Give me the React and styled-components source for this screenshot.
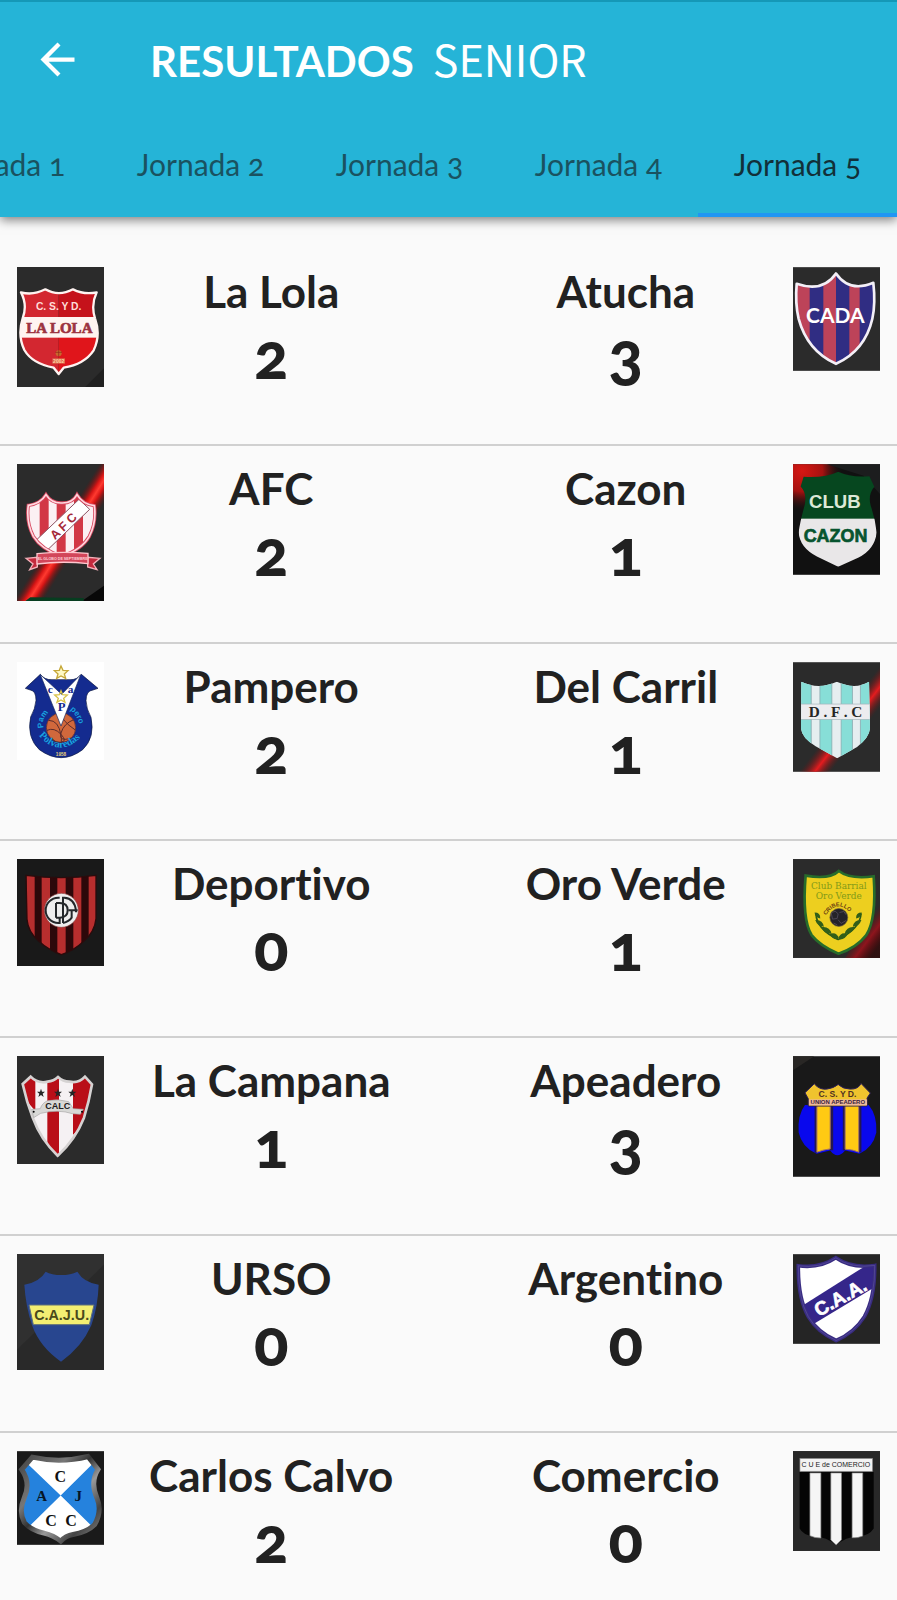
import React from "react";
import styled, { createGlobalStyle } from "styled-components";

const GlobalStyle = createGlobalStyle`
  * { box-sizing: border-box; }
  body {
    margin: 0;
    background: #fafafa;
    color: #212121;
    font-family: Lato, "Open Sans", sans-serif;
    font-variant-ligatures: none;
  }
`;

const Screen = styled.div`
  display: flex;
  flex-direction: column;
  height: 100vh;
`;

const AppBar = styled.header`
  position: relative;
  z-index: 1;
  flex: none;
  background: #25b4d7;
  border-top: 2px solid #1598b7;
  box-shadow: 0 3px 10px rgba(0, 0, 0, 0.5);
`;

const Toolbar = styled.div`
  display: flex;
  align-items: center;
  height: 114px;
  padding-left: 32px;
  gap: 67px;
`;

const BackButton = styled.button`
  display: flex;
  padding: 0;
  border: 0;
  background: none;
  color: #fff;
  cursor: pointer;
`;

const Title = styled.h1`
  display: flex;
  align-items: baseline;
  gap: 19px;
  margin: 0;
  color: #fff;
  font-size: 42px;
  line-height: 56px;
  font-weight: 700;
`;

const Category = styled.span`
  font-family: "Noto Sans CJK SC", "Noto Sans", sans-serif;
  font-size: 43px;
  font-weight: 400;
`;

const Tabs = styled.div`
  display: flex;
  justify-content: flex-end;
  overflow: hidden;
`;

const Tab = styled.button`
  flex: 0 0 199px;
  height: 101px;
  padding: 0 0 2px;
  border: 0;
  border-bottom: 4px solid ${(p) => (p.$active ? "#2196f3" : "transparent")};
  background: none;
  color: ${(p) => (p.$active ? "#123039" : "#1a5260")};
  font-family: inherit;
  font-size: 30px;
  font-variant-numeric: oldstyle-nums;
  white-space: nowrap;
  cursor: pointer;
`;

const MatchList = styled.ul`
  flex: 1;
  min-height: 0;
  margin: 0;
  padding: 32px 0 0;
  list-style: none;
  overflow-y: auto;
  scrollbar-width: none;
`;

const MatchRow = styled.li`
  display: flex;
  align-items: flex-start;
  height: 22vw;
  padding: 18px 17px 0;
  border-bottom: 2px solid #d0d0d0;
`;

const Side = styled.div`
  flex: 1;
  text-align: center;
  padding: ${(p) => (p.$away ? "0 0 0 10px" : "0 10px 0 0")};
`;

const TeamName = styled.h2`
  margin: 0;
  font-size: 44px;
  line-height: 48px;
  font-weight: 700;
  white-space: nowrap;
`;

const Score = styled.p`
  margin: 0;
  font-size: 64px;
  line-height: 80px;
  font-weight: 900;
  font-variant-numeric: oldstyle-nums;
`;

const CrestSvg = styled.svg`
  flex: none;
  display: block;
  width: 87px;
`;

const sans = "Liberation Sans, sans-serif";
const serif = "Liberation Serif, serif";

function Crest({ box, label, bg = "#2b2b2b", children }) {
  const [x, y, w, h] = box;
  return (
    <CrestSvg viewBox={box.join(" ")} height={Math.round(h / 3)} role="img" aria-label={label}>
      <rect x={x} y={y} width={w} height={h} fill={bg} />
      {children}
    </CrestSvg>
  );
}

const T = ({ x, y, size, fill, family = sans, weight = 700, anchor = "middle", ...rest }) => (
  <text x={x} y={y} fontSize={size} fill={fill} fontFamily={family} fontWeight={weight} textAnchor={anchor} {...rest} />
);

const lolaShape =
  "M62 112Q98 122 135 103Q175 126 218 103Q252 120 289 112Q271 150 284 190Q302 240 280 286Q252 328 190 338L175 357L160 338Q96 326 72 285Q51 240 67 190Q82 150 62 112Z";
const LaLola = () => (
  <Crest box={[50, 36, 261, 360]} label="La Lola">
    <path d="M311 340L255 396H311Z" fill="#202020" />
    <clipPath id="lola"><path d={lolaShape} /></clipPath>
    <g clipPath="url(#lola)">
      <rect x="50" y="90" width="125" height="280" fill="#d32730" />
      <rect x="175" y="90" width="130" height="280" fill="#c5121b" />
      <rect x="175" y="248" width="130" height="120" fill="#e0151b" />
      <rect x="50" y="186" width="261" height="62" fill="#fff4f1" />
    </g>
    <path d={lolaShape} fill="none" stroke="#fff3f1" strokeWidth="7" strokeLinejoin="round" />
    <T x={175} y={165} size={31} fill="#ffdcd8" weight={700}>C. S. Y D.</T>
    <T x={177} y={233} size={45} fill="#9c3340" family={serif} stroke="#9c3340" strokeWidth="2">LA LOLA</T>
    <circle cx="175" cy="295" r="9" fill="#c8682d" />
    <path d="M165 292h20M175 286v18" stroke="#8f2418" strokeWidth="2" />
    <rect x="156" y="310" width="38" height="16" fill="#dc6a4d" />
    <T x={175} y={324} size={15} fill="#ffd5a5">2002</T>
  </Crest>
);

const atuchaShape =
  "M1041 101Q1119 128 1159 70Q1199 128 1271 98Q1278 160 1268 206Q1246 302 1159 341Q1073 302 1047 206Q1036 160 1041 101Z";
const Atucha = () => (
  <Crest box={[1030, 51, 261, 311]} label="Atucha">
    <clipPath id="atucha"><path d={atuchaShape} /></clipPath>
    <g clipPath="url(#atucha)">
      <rect x="1030" y="60" width="261" height="290" fill="#302d83" />
      <rect x="1030" y="60" width="50" height="290" fill="#bd4359" />
      <rect x="1121" y="60" width="38" height="290" fill="#bd4359" />
      <rect x="1199" y="60" width="31" height="290" fill="#bd4359" />
    </g>
    <path d={atuchaShape} fill="none" stroke="#f3eff7" strokeWidth="8" strokeLinejoin="round" />
    <T x={1157} y={220} size={63} fill="#fff" family="Lato, sans-serif">CADA</T>
  </Crest>
);

const afcShape =
  "M84 154Q120 150 137 122Q153 148 184 147Q216 148 230 122Q247 151 282 155Q289 205 267 247Q245 286 184 307Q123 286 99 247Q77 205 84 154Z";
const Afc = () => (
  <Crest box={[50, 30, 261, 411]} label="AFC">
    <defs>
      <linearGradient id="beamA" gradientUnits="userSpaceOnUse" x1="164" y1="242" x2="228" y2="282">
        <stop offset="0" stopColor="#650d0d" stopOpacity="0" />
        <stop offset="0.35" stopColor="#d51515" />
        <stop offset="0.5" stopColor="#ff3a30" />
        <stop offset="0.65" stopColor="#d51515" />
        <stop offset="1" stopColor="#650d0d" stopOpacity="0" />
      </linearGradient>
      <clipPath id="afc"><path d={afcShape} /></clipPath>
    </defs>
    <path d="M50 30H311V441H50Z" fill="url(#beamA)" />
    <path d="M311 395L245 441H311Z" fill="#080808" />
    <path d="M90 430L250 432V441H75Z" fill="#073d20" />
    <g clipPath="url(#afc)">
      <rect x="70" y="110" width="225" height="205" fill="#fbf0f3" />
      <path d="M118 110h27v200h-27zM169 110h27v200h-27zM221 110h27v200h-27z" fill="#d23745" />
      <path d="M104 262L236 136L268 166L134 295Z" fill="#fff" stroke="#8c5261" strokeWidth="3" />
    </g>
    <path d={afcShape} fill="none" stroke="#d7475f" strokeWidth="10" />
    <path d={afcShape} fill="none" stroke="#ffd8df" strokeWidth="5" />
    <T x={189} y={229} size={37} fill="#a52838" transform="rotate(-44 189 216)">A F C</T>
    <path d="M77 313L111 310V339L88 347L98 330ZM299 313L262 310V339L290 347L279 330Z" fill="#c42a3d" stroke="#f3b1ba" strokeWidth="4" />
    <path d="M110 299Q185 292 263 298V329Q185 320 110 330Z" fill="#d2465a" stroke="#ffc6ce" strokeWidth="4" />
    <T x={187} y={317} size={11} fill="#ffd0d6">EL GLOBO DE SEPTIEMBRE</T>
  </Crest>
);

const Cazon = () => (
  <Crest box={[48, 30, 262, 333]} label="Cazon" bg="#111">
    <defs>
      <radialGradient id="glowC" gradientUnits="userSpaceOnUse" cx="75" cy="50" r="125">
        <stop offset="0" stopColor="#d61713" />
        <stop offset="0.5" stopColor="#a51210" />
        <stop offset="1" stopColor="#111" stopOpacity="0" />
      </radialGradient>
      <clipPath id="cazon">
        <path d="M80 68Q145 72 184 53Q224 71 278 66L293 98Q273 122 282 155Q296 195 300 236Q294 288 244 312L184 339L120 308Q68 281 65 235Q69 205 80 165Q94 121 71 97Z" />
      </clipPath>
    </defs>
    <rect x="48" y="30" width="262" height="240" fill="url(#glowC)" />
    <path d="M150 30H310V120L260 65Z" fill="#1c1d1e" />
    <g clipPath="url(#cazon)">
      <rect x="48" y="45" width="262" height="150" fill="#06471f" />
      <rect x="48" y="194" width="262" height="150" fill="#e9e7e8" />
    </g>
    <T x={174} y={163} size={56} fill="#dce8d6">CLUB</T>
    <T x={176} y={265} size={54} fill="#07542f" stroke="#07542f" strokeWidth="2">CAZON</T>
  </Crest>
);

const Pampero = () => (
  <Crest box={[50, 65, 261, 294]} label="Pampero" bg="#fff">
    <path
      d="M120 102Q133 119 155 118H209Q230 119 243 102L293 144L278 149Q257 151 257 181Q258 206 272 231Q285 292 247 328Q183 376 117 328Q78 291 91 230Q105 205 107 180Q107 151 90 149L75 144Z"
      fill="#142b8f"
      stroke="#08143e"
      strokeWidth="2"
    />
    <circle cx="182" cy="262" r="44" fill="#d1683c" stroke="#582a2d" strokeWidth="2" />
    <path d="M145 240Q175 240 182 285T154 294M220 238Q190 250 182 278T213 293M140 270Q162 260 182 282T182 305M182 218Q182 240 225 269" fill="none" stroke="#5b2c2c" strokeWidth="3" />
    <path d="M120 103L182 257L241 103L184 162Z" fill="#fff" stroke="#14255d" strokeWidth="2" />
    <path d="M148 119H216L182 162Z" fill="#142b8f" />
    <path d="M182 77L188 90L203 91L192 101L196 114L182 107L169 114L173 101L162 91L177 90Z" fill="#fffac5" stroke="#c5a738" strokeWidth="4" />
    <path d="M182 151L187 163L201 164L190 174L194 186L182 179L170 186L174 174L163 164L177 163Z" fill="none" stroke="#d7c247" strokeWidth="4" />
    <T x={150} y={157} size={34} fill="#142b8f" family={serif}>c</T>
    <T x={211} y={157} size={34} fill="#142b8f" family={serif}>a</T>
    <T x={184} y={211} size={38} fill="#142b8f" family={serif}>P</T>
    <path id="pampLeft" d="M130 262Q120 232 157 207" fill="none" />
    <path id="pampRight" d="M209 209Q232 224 240 266" fill="none" />
    <path id="pampLow" d="M115 285Q181 362 254 278" fill="none" />
    <text fontFamily={sans} fontSize="24" fontWeight="700" fill="#18a2df"><textPath href="#pampLeft">Pam</textPath></text>
    <text fontFamily={sans} fontSize="24" fontWeight="700" fill="#18a2df"><textPath href="#pampRight">pero</textPath></text>
    <text fontFamily={serif} fontSize="31" fontWeight="700" fill="#18a2df"><textPath href="#pampLow">Polvaredas</textPath></text>
    <T x={182} y={346} size={14} fill="#e6d278">1958</T>
  </Crest>
);

const DelCarril = () => (
  <Crest box={[48, 65, 262, 330]} label="Del Carril">
    <defs>
      <linearGradient id="beamD" gradientUnits="userSpaceOnUse" x1="178" y1="249" x2="238" y2="295">
        <stop offset="0" stopColor="#711" stopOpacity="0" />
        <stop offset="0.5" stopColor="#e51c1f" />
        <stop offset="1" stopColor="#711" stopOpacity="0" />
      </linearGradient>
      <clipPath id="dfc">
        <path d="M73 124Q125 149 180 124Q235 149 277 124L280 265Q277 294 241 320L181 354L116 318Q75 294 72 265Z" />
      </clipPath>
    </defs>
    <path d="M48 65H310V395H48Z" fill="url(#beamD)" />
    <g clipPath="url(#dfc)">
      <rect x="60" y="110" width="230" height="250" fill="#e6eef0" />
      <path d="M70 110h33v250H70zM129 110h36v250h-36zM193 110h34v250h-34zM251 110h31v250h-31z" fill="#87ded7" />
      <path d="M103 110v250M129 110v250M165 110v250M193 110v250M227 110v250M251 110v250" stroke="#829da5" strokeWidth="2" />
      <rect x="68" y="191" width="215" height="46" fill="#ececef" stroke="#a6b3ba" strokeWidth="2" />
    </g>
    <T x={176} y={230} size={46} fill="#252525" family={serif}>D . F . C</T>
  </Crest>
);

const deportivoShape = "M77 707Q182 721 287 707V837Q283 877 251 904Q222 932 183 945Q143 930 115 904Q83 876 80 839Z";
const Deportivo = () => (
  <Crest box={[50, 658, 261, 321]} label="Deportivo" bg="#191919">
    <clipPath id="dep"><path d={deportivoShape} /></clipPath>
    <g clipPath="url(#dep)">
      <rect x="70" y="690" width="230" height="270" fill="#2d080a" />
      <path d="M78 690h25v270H78zM124 690h25v270h-25zM171 690h25v270h-25zM219 690h24v270h-24zM265 690h24v270h-24z" fill="#b82e2e" />
    </g>
    <path d={deportivoShape} fill="none" stroke="#2a0b0c" strokeWidth="4" />
    <circle cx="183" cy="812" r="51" fill="#eee" stroke="#8e4040" strokeWidth="2" />
    <g fill="none" stroke="#24272a" strokeWidth="6">
      <path d="M178 774H174A38 38 0 0 0 174 850H178V832" />
      <path d="M167 790V834M167 790H178Q202 790 202 812T178 834H167" />
      <path d="M188 850V774H192Q222 776 227 812V818M204 812H232M214 812V834Q206 846 188 850" />
    </g>
  </Crest>
);

const OroVerde = () => (
  <Crest box={[48, 658, 262, 298]} label="Oro Verde">
    <defs>
      <linearGradient id="beamO" gradientUnits="userSpaceOnUse" x1="240" y1="885" x2="300" y2="930">
        <stop offset="0" stopColor="#611" stopOpacity="0" />
        <stop offset="0.5" stopColor="#8e151d" />
        <stop offset="1" stopColor="#300" stopOpacity="0.6" />
      </linearGradient>
    </defs>
    <path d="M310 790V956H205Z" fill="url(#beamO)" />
    <path d="M86 708Q158 721 186 694Q220 720 291 710Q300 840 268 888Q240 925 185 943Q130 920 104 887Q75 840 86 708Z" fill="#edcf1f" stroke="#276c2b" strokeWidth="8" />
    <T x={186} y={748} size={27} fill="#819a19" family="DejaVu Serif, serif" weight={400}>Club Barrial</T>
    <T x={186} y={779} size={27} fill="#819a19" family="DejaVu Serif, serif" weight={400}>Oro Verde</T>
    <path id="oroArc" d="M147 828Q186 770 232 834" fill="none" />
    <text fontFamily={sans} fontSize="17" fontWeight="700" fill="#6b3d13"><textPath href="#oroArc">CRIBELLO</textPath></text>
    <circle cx="186" cy="834" r="27" fill="#252329" stroke="#6f6037" strokeWidth="2" />
    <path d="M163 820L175 815L184 823L181 837L167 839ZM188 819L201 816L208 826M184 841L193 852L208 843M170 851L181 856" stroke="#4c4653" strokeWidth="3" fill="none" />
    <path d="M117 822Q119 870 184 900Q250 868 253 822" fill="none" stroke="#295a18" strokeWidth="5" />
    <path d="M113 819q18 0 17 18q-16-3-17-18M115 842q22-2 26 20q-20-1-26-20M133 863q25-4 31 19q-20 4-31-19M158 884q21-9 30 15q-20 5-30-15M255 819q-18 0-17 18q16-3 17-18M254 842q-22-2-26 20q20-1 26-20M235 863q-25-4-31 19q20 4 31-19M213 884q-21-9-30 15q20 5 30-15" fill="#315e19" />
  </Crest>
);

const campanaShape = "M67 133L91 111Q112 133 142 126Q160 124 173 112Q188 126 207 126Q235 132 254 111L275 134Q266 187 251 234Q225 300 172 348Q121 300 97 234Q79 187 67 133Z";
const Star = ({ x, y }) => <path transform={`translate(${x} ${y})`} d="M0-13L3-4H12L5 2L8 12L0 6L-8 12L-5 2L-12-4H-3Z" fill="#252525" />;
const LaCampana = () => (
  <Crest box={[50, 49, 261, 324]} label="La Campana">
    <clipPath id="campana"><path d={campanaShape} /></clipPath>
    <g clipPath="url(#campana)">
      <rect x="60" y="100" width="220" height="260" fill="#f5f1f3" />
      <path d="M67 100H105V214L67 170ZM141 100H176V360H141ZM218 100H282V225L218 285Z" fill="#b90e18" />
    </g>
    <path d={campanaShape} fill="none" stroke="#d5d2d2" strokeWidth="8" />
    <Star x={122} y={160} /><Star x={173} y={160} /><Star x={216} y={160} />
    <path d="M94 209L120 207Q125 190 142 183Q175 177 205 186L219 207L249 209L240 224L216 222Q174 208 121 221L100 234Z" fill="#d8d8d6" stroke="#a6a4a4" strokeWidth="2" />
    <T x={172} y={209} size={27} fill="#202020">CALC</T>
    <circle cx="100" cy="216" r="3" /><circle cx="245" cy="216" r="3" />
  </Crest>
);

const Apeadero = () => (
  <Crest box={[48, 49, 262, 363]} label="Apeadero" bg="#191919">
    <path d="M48 49H112L48 91Z" fill="#292725" />
    <path d="M84 196Q61 226 65 279Q75 324 119 343L160 333Q181 362 205 333L248 343Q289 325 299 279Q302 227 276 196Z" fill="#0908ed" />
    <path d="M113 197H124V338L113 340ZM156 197H169V332H156ZM198 197H211V332H198ZM242 197H254V339L242 335Z" fill="#241752" />
    <path d="M120 197H160V328Q140 330 120 338ZM205 197H246V338Q230 330 205 329Z" fill="#ffca13" stroke="#a67561" strokeWidth="3" />
    <path d="M84 159L112 132Q128 151 150 148Q171 145 184 134Q199 148 220 148Q244 149 253 131L281 160L271 175V199H94V177Z" fill="#efc32e" stroke="#291e55" strokeWidth="3" />
    <rect x="96" y="179" width="175" height="18" fill="#efb99a" />
    <T x={182} y={172} size={26} fill="#4f3021">C. S. Y D.</T>
    <T x={183} y={194} size={18} fill="#3b243b">UNION APEADERO</T>
  </Crest>
);

const Urso = () => (
  <Crest box={[50, 643, 261, 348]} label="URSO" bg="#292929">
    <path d="M50 643H311V675L50 930Z" fill="#303030" />
    <path d="M72 735Q118 727 136 696Q154 706 183 706Q211 706 231 696Q250 728 295 735Q293 799 273 857Q244 923 182 966Q119 923 95 857Q76 799 72 735Z" fill="#28468f" />
    <path d="M86 796H281L267 855H99Z" fill="#f3ee72" stroke="#5f6f78" strokeWidth="3" />
    <T x={184} y={841} size={43} fill="#4a491b">C.A.J.U.</T>
  </Crest>
);

const argentinoShape = "M64 678Q128 687 177 654Q224 687 294 677Q295 774 263 831Q233 879 178 903Q121 877 94 831Q63 776 64 678Z";
const Argentino = () => (
  <Crest box={[48, 643, 262, 270]} label="Argentino" bg="#252525">
    <clipPath id="arg"><path d={argentinoShape} /></clipPath>
    <path d={argentinoShape} fill="#fff" />
    <g clipPath="url(#arg)"><path d="M70 802L254 686L311 660V732L105 856Z" fill="#35268a" /></g>
    <path d={argentinoShape} fill="none" stroke="#392c82" strokeWidth="11" />
    <path d={argentinoShape} fill="none" stroke="#8178b6" strokeWidth="1" />
    <T x={191} y={793} size={57} fill="#fff" transform="rotate(-29 191 774)" stroke="#fff" strokeWidth="2">C.A.A.</T>
  </Crest>
);

const calvoShape = "M96 82Q180 101 263 80L293 119Q269 157 290 205Q306 244 283 284Q262 306 218 314Q196 318 181 334Q160 317 131 310Q91 301 72 278Q54 245 72 203Q92 159 64 119Z";
const CarlosCalvo = () => (
  <Crest box={[50, 64, 261, 281]} label="Carlos Calvo" bg="#1a1a1a">
    <defs>
      <clipPath id="calvo"><path d={calvoShape} /></clipPath>
      <linearGradient id="steel" x1="0" x2="1" y1="0" y2="1">
        <stop offset="0" stopColor="#444" /><stop offset="0.3" stopColor="#777" />
        <stop offset="0.45" stopColor="#333" /><stop offset="0.6" stopColor="#999" />
        <stop offset="0.8" stopColor="#444" /><stop offset="1" stopColor="#888" />
      </linearGradient>
    </defs>
    <g clipPath="url(#calvo)">
      <rect x="50" y="70" width="261" height="275" fill="#fff" />
      <path d="M62 83L181 197L62 314ZM300 79L181 197L300 314Z" fill="#2582dd" />
    </g>
    <path d={calvoShape} fill="none" stroke="url(#steel)" strokeWidth="15" />
    <T x={180} y={158} size={48} fill="#111" family={serif}>C</T>
    <T x={124} y={213} size={45} fill="#061527" family={serif}>A</T>
    <T x={234} y={213} size={45} fill="#061527" family={serif}>J</T>
    <T x={152} y={290} size={48} fill="#111" family={serif}>C</T>
    <T x={212} y={290} size={48} fill="#111" family={serif}>C</T>
  </Crest>
);

const Comercio = () => (
  <Crest box={[48, 64, 262, 301]} label="Comercio" bg="#282828">
    <path d="M68 127H291V297Q277 319 247 320Q205 323 178 348Q151 323 108 320Q78 316 68 297Z" fill="#050505" />
    <path d="M99 130H132V326Q113 326 99 319ZM162 130H194V331L178 347L162 332ZM226 130H258V320Q242 327 226 325Z" fill="#f5f5f5" stroke="#888" strokeWidth="2" />
    <rect x="69" y="87" width="218" height="38" fill="#f3f3f3" stroke="#999" strokeWidth="2" />
    <T x={177} y={113} size={21} fill="#222" weight={400}>C U E de COMERCIO</T>
  </Crest>
);

const matches = [
  { home: ["La Lola", 2, LaLola], away: ["Atucha", 3, Atucha] },
  { home: ["AFC", 2, Afc], away: ["Cazon", 1, Cazon] },
  { home: ["Pampero", 2, Pampero], away: ["Del Carril", 1, DelCarril] },
  { home: ["Deportivo", 0, Deportivo], away: ["Oro Verde", 1, OroVerde] },
  { home: ["La Campana", 1, LaCampana], away: ["Apeadero", 3, Apeadero] },
  { home: ["URSO", 0, Urso], away: ["Argentino", 0, Argentino] },
  { home: ["Carlos Calvo", 2, CarlosCalvo], away: ["Comercio", 0, Comercio] },
];

function Match({ home, away }) {
  const [homeName, homeScore, HomeCrest] = home;
  const [awayName, awayScore, AwayCrest] = away;
  return (
    <MatchRow>
      <HomeCrest />
      <Side>
        <TeamName>{homeName}</TeamName>
        <Score>{homeScore}</Score>
      </Side>
      <Side $away>
        <TeamName>{awayName}</TeamName>
        <Score>{awayScore}</Score>
      </Side>
      <AwayCrest />
    </MatchRow>
  );
}

export default function App() {
  const [active, setActive] = React.useState(5);
  return (
    <Screen>
      <GlobalStyle />
      <AppBar>
        <Toolbar>
          <BackButton type="button" aria-label="Volver">
            <svg width="51" height="51" viewBox="0 0 24 24" fill="currentColor" aria-hidden="true">
              <path d="M20 11H7.83l5.59-5.59L12 4l-8 8 8 8 1.41-1.41L7.83 13H20v-2z" />
            </svg>
          </BackButton>
          <Title>
            RESULTADOS <Category>SENIOR</Category>
          </Title>
        </Toolbar>
        <Tabs role="tablist">
          {[1, 2, 3, 4, 5].map((n) => (
            <Tab key={n} type="button" role="tab" aria-selected={n === active} $active={n === active} onClick={() => setActive(n)}>
              Jornada {n}
            </Tab>
          ))}
        </Tabs>
      </AppBar>
      <MatchList>
        {matches.map((m) => (
          <Match key={m.home[0]} {...m} />
        ))}
      </MatchList>
    </Screen>
  );
}
